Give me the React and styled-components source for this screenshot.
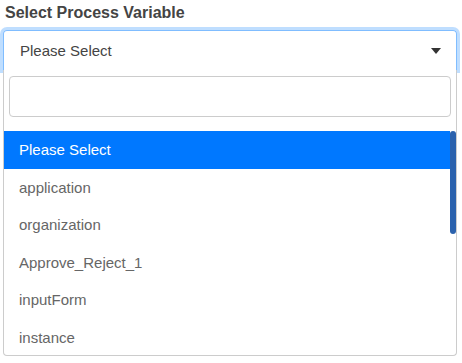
import React from "react";
import styled, { createGlobalStyle } from "styled-components";

const Global = createGlobalStyle`
  html, body { margin: 0; padding: 0; background: #fff; }
  body { font-family: "Liberation Sans", Arial, sans-serif; }
  * { box-sizing: border-box; }
`;

const Wrapper = styled.div`
  width: 462px;
  height: 363px;
  padding: 3px 5px 0 3px;
  overflow: hidden;
`;

const Label = styled.div`
  font-size: 16px;
  font-weight: bold;
  line-height: 20px;
  color: #444;
  padding-left: 2px;
  margin-bottom: 7px;
`;

const Field = styled.div`
  width: 454px;
`;

const Selection = styled.div`
  height: 40px;
  border: 1px solid #80bdff;
  border-bottom: none;
  border-radius: 4px 4px 0 0;
  box-shadow: 0 0 0 3px rgba(0, 123, 255, 0.25);
  display: flex;
  align-items: center;
  justify-content: space-between;
  padding: 0 15px 0 16px;
  font-size: 15px;
  color: #444;
`;

const Arrow = styled.span`
  width: 0;
  height: 0;
  border-left: 5px solid transparent;
  border-right: 5px solid transparent;
  border-top: 6px solid #333;
  margin-top: 1px;
`;

const Dropdown = styled.div`
  position: relative;
  z-index: 1;
  background: #fff;
  border: 1px solid #ccc;
  border-top: none;
  border-radius: 0 0 4px 4px;
`;

const SearchBox = styled.div`
  padding: 6px 5px 14px 5px;
`;

const SearchInput = styled.input`
  display: block;
  width: 100%;
  height: 41px;
  border: 1px solid #ccc;
  border-radius: 4px;
  outline: none;
  font: inherit;
  font-size: 15px;
  padding: 0 10px;
`;

const Results = styled.div`
  display: flex;
  height: 224px;
`;

const OptionList = styled.ul`
  list-style: none;
  margin: 0;
  padding: 0;
  flex: 1;
  overflow: hidden;
`;

const Option = styled.li`
  height: 37.5px;
  display: flex;
  align-items: center;
  padding-left: 15px;
  font-size: 15px;
  color: ${(p) => (p.$active ? "#fff" : "#666")};
  background: ${(p) => (p.$active ? "#0078ff" : "transparent")};
`;

const ScrollTrack = styled.div`
  width: 6px;
  flex: none;
`;

const Thumb = styled.div`
  height: 103px;
  border-radius: 3px;
  background: #2b62ad;
`;

const options = [
  "Please Select",
  "application",
  "organization",
  "Approve_Reject_1",
  "inputForm",
  "instance",
];

export default function App() {
  return (
    <>
      <Global />
      <Wrapper>
        <Label>Select Process Variable</Label>
        <Field>
          <Selection>
            <span>Please Select</span>
            <Arrow />
          </Selection>
          <Dropdown>
            <SearchBox>
              <SearchInput type="search" />
            </SearchBox>
            <Results>
              <OptionList>
                {options.map((o, i) => (
                  <Option key={o} $active={i === 0}>
                    {o}
                  </Option>
                ))}
              </OptionList>
              <ScrollTrack>
                <Thumb />
              </ScrollTrack>
            </Results>
          </Dropdown>
        </Field>
      </Wrapper>
    </>
  );
}
